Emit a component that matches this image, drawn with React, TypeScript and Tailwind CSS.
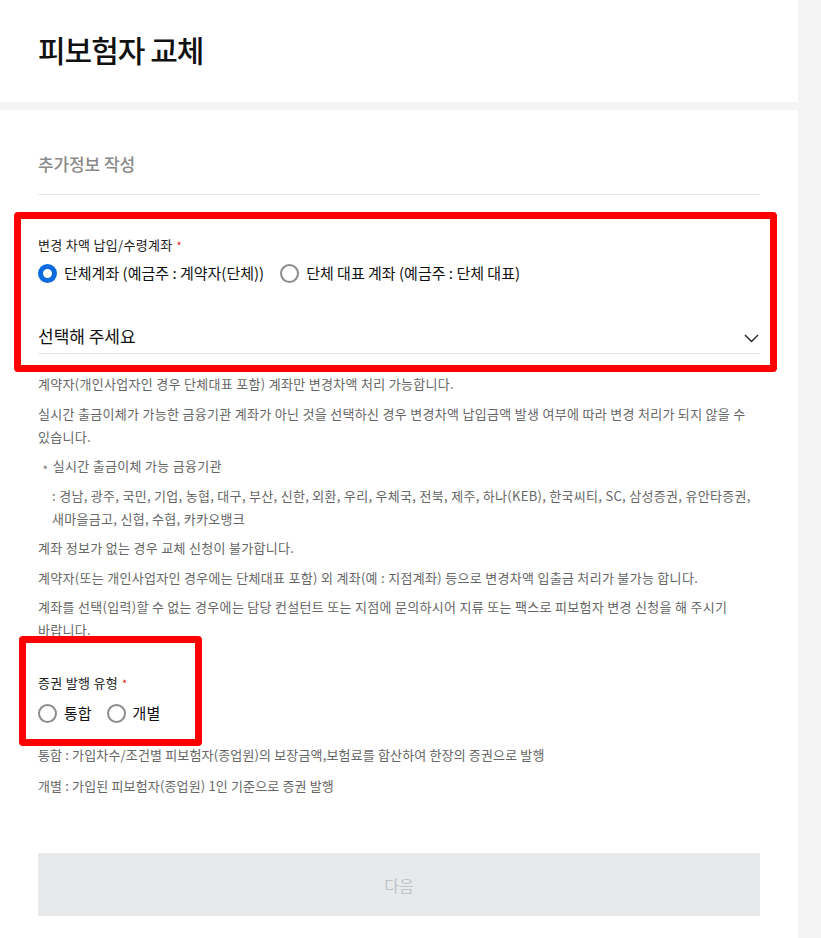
import React from "react";

const font = { fontFamily: '"Noto Sans CJK KR", "Noto Sans", sans-serif' };

function Radio({ label, checked }: { label: string; checked?: boolean }) {
  return (
    <label className="flex items-center gap-[7px] text-[15px] leading-[22px] text-[#111]">
      <span
        className={
          checked
            ? "w-[19px] h-[19px] rounded-full border-[5px] border-[#0b6bde] bg-white"
            : "w-[19px] h-[19px] rounded-full border-2 border-[#8c8c8c] bg-white"
        }
      />
      {label}
    </label>
  );
}

function Label({ children }: { children: React.ReactNode }) {
  return (
    <div className="flex items-start gap-1 text-[13px] leading-[18px] text-[#222] tracking-[0.3px]">
      {children}
      <span className="text-[11px] text-[#e3231b]">*</span>
    </div>
  );
}

export default function App() {
  return (
    <div className="flex min-h-screen bg-[#f4f4f4]" style={font}>
      <div className="w-[798px] bg-white">
        <header className="h-[102px] px-[38px] pt-[29px]">
          <h1 className="text-[30px] leading-[40px] font-medium text-[#111] tracking-[-1px]">
            피보험자 교체
          </h1>
        </header>
        <div className="h-2 bg-[#f4f4f4]" />

        <main className="px-[38px] pt-[42px] pb-[23px]">
          <h2 className="text-[17px] leading-[24px] text-[#8a8a8a] font-medium tracking-[-0.1px] pb-[18px] border-b border-[#e6e6e6]">
            추가정보 작성
          </h2>

          {/* 변경 차액 계좌 */}
          <section className="relative mt-[17px] pt-[24px] pb-[18px]">
            <div className="absolute top-0 bottom-0 left-[-24px] right-[-17px] border-[7px] border-[#ff0000] rounded-[4px] pointer-events-none" />
            <Label>변경 차액 납입/수령계좌</Label>
            <div className="flex items-center gap-4 mt-[8px]">
              <Radio label="단체계좌 (예금주 : 계약자(단체))" checked />
              <Radio label="단체 대표 계좌 (예금주 : 단체 대표)" />
            </div>
            <div className="mt-[40px] flex items-center justify-between border-b border-[#e5e5e5] pb-[5px]">
              <span className="text-[17px] leading-[24px] text-[#111]">선택해 주세요</span>
              <svg width="15" height="9" viewBox="0 0 15 9" className="mr-[1px] mt-[4px]">
                <polyline points="1,1 7.5,7.5 14,1" fill="none" stroke="#222" strokeWidth="1.4" />
              </svg>
            </div>
          </section>

          <div className="text-[13px] leading-[23px] text-[#666] tracking-[0.3px] space-y-[6.5px]">
            <p>계약자(개인사업자인 경우 단체대표 포함) 계좌만 변경차액 처리 가능합니다.</p>
            <p>
              실시간 출금이체가 가능한 금융기관 계좌가 아닌 것을 선택하신 경우 변경차액 납입금액 발생 여부에 따라 변경 처리가 되지 않을 수
              <br />
              있습니다.
            </p>
            <p className="flex gap-[5px] pl-[5px]">
              <span className="text-[#999]">•</span>실시간 출금이체 가능 금융기관
            </p>
            <p className="pl-[14px]">
              : 경남, 광주, 국민, 기업, 농협, 대구, 부산, 신한, 외환, 우리, 우체국, 전북, 제주, 하나(KEB), 한국씨티, SC, 삼성증권, 유안타증권,
              <br />
              새마을금고, 신협, 수협, 카카오뱅크
            </p>
            <p>계좌 정보가 없는 경우 교체 신청이 불가합니다.</p>
            <p>계약자(또는 개인사업자인 경우에는 단체대표 포함) 외 계좌(예 : 지점계좌) 등으로 변경차액 입출금 처리가 불가능 합니다.</p>
            <p>
              계좌를 선택(입력)할 수 없는 경우에는 담당 컨설턴트 또는 지점에 문의하시어 지류 또는 팩스로 피보험자 변경 신청을 해 주시기
              <br />
              바랍니다.
            </p>
          </div>

          {/* 증권 발행 유형 */}
          <section className="relative pt-[33px] pb-[19px]">
            <div className="absolute top-[-5px] bottom-[-3px] left-[-19px] w-[183px] border-[7px] border-[#ff0000] rounded-[4px] pointer-events-none" />
            <Label>증권 발행 유형</Label>
            <div className="flex items-center gap-[15px] mt-[10px]">
              <Radio label="통합" />
              <Radio label="개별" />
            </div>
          </section>

          <div className="text-[13px] leading-[23px] text-[#666] tracking-[0.15px] space-y-[8px]">
            <p>통합 : 가입차수/조건별 피보험자(종업원)의 보장금액,보험료를 합산하여 한장의 증권으로 발행</p>
            <p>개별 : 가입된 피보험자(종업원) 1인 기준으로 증권 발행</p>
          </div>

          <button
            type="button"
            disabled
            className="mt-[56px] w-full h-[63px] bg-[#e8e9eb] text-[16px] text-[#bfc3cb]"
          >
            다음
          </button>
        </main>
      </div>
      <div className="flex-1 bg-[#f4f4f4]" />
    </div>
  );
}
